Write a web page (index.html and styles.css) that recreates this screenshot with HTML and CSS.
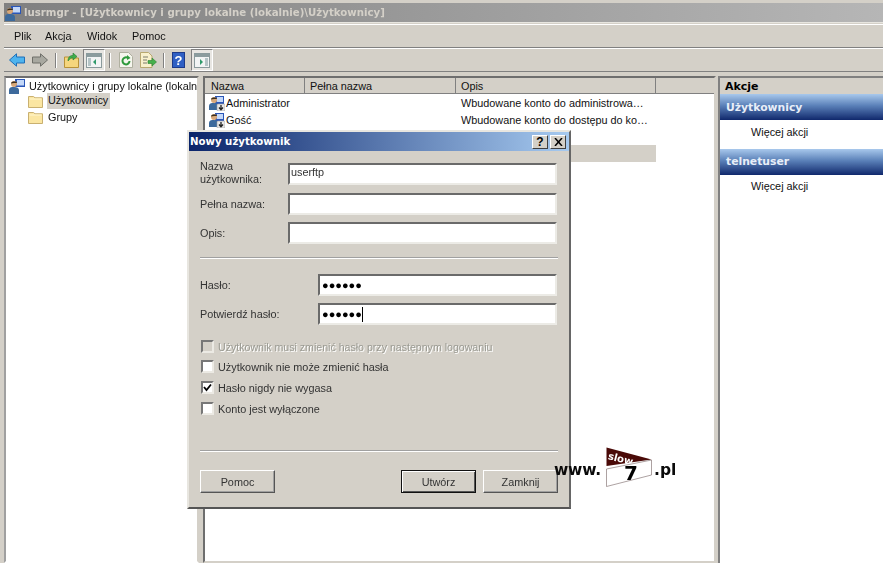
FILE: index.html
```html
<!DOCTYPE html>
<html lang="pl">
<head>
<meta charset="utf-8">
<title>lusrmgr</title>
<link rel="stylesheet" href="styles.css">
</head>
<body>
<svg width="0" height="0" class="defs">
  <defs>
    <symbol id="user" viewBox="0 0 16 16">
      <rect x="6" y="1" width="9" height="8" fill="#2a56b8"/><rect x="8" y="2" width="6" height="5" fill="#c4d8f8"/>
      <circle cx="5" cy="5" r="3" fill="#d9a878"/><path d="M2 4.500C2 2 8 2 8 4L5 4Z" fill="#3a3020"/>
      <path d="M0 15V11C0 8.500 2 8 5 8S9 9 9 11V15Z" fill="#3d6a9c"/>
      <rect x="8" y="9" width="8" height="7" rx="1" fill="#e8e8e8" stroke="#9a9a9a" stroke-width=".6"/>
      <path d="M12 10V14M10 12.500L12 14.800L14 12.500" stroke="#222" stroke-width="1.300" fill="none"/>
    </symbol>
    <symbol id="user-net" viewBox="0 0 16 16">
      <rect x="6" y="1" width="10" height="8" fill="#2a56b8"/><rect x="8" y="2" width="7" height="5.500" fill="#c4d8f8"/>
      <circle cx="5" cy="6" r="3" fill="#d9a878"/><path d="M2 5.500C2 3 8 3 8 5L5 5Z" fill="#3a3020"/>
      <path d="M0 16V12C0 9.500 2 9 5 9S10 10 10 12V16Z" fill="#3d6a9c"/>
    </symbol>
    <symbol id="folder" viewBox="0 0 15 13">
      <path d="M.5 12.500V1.500H5.500L7 2.800H14.500V12.500Z" fill="#fbe6a2" stroke="#c9b070"/>
      <path d="M1.500 4H13.500" stroke="#fff6cf"/>
    </symbol>
    <symbol id="pane" viewBox="0 0 16 15">
      <rect x=".5" y=".5" width="15" height="14" fill="#f2f4f4" stroke="#8a9a9c"/>
      <rect x="1" y="1" width="14" height="3" fill="#8b9c9e"/>
      <rect x="2" y="5" width="3" height="8" fill="#b4c4c6"/>
      <path d="M10 6V12L7 9Z" fill="#2f9a6a"/>
    </symbol>
    <symbol id="pane-r" viewBox="0 0 16 15">
      <rect x=".5" y=".5" width="15" height="14" fill="#f2f4f4" stroke="#8a9a9c"/>
      <rect x="1" y="1" width="14" height="3" fill="#8b9c9e"/>
      <rect x="11" y="5" width="3" height="8" fill="#b4c4c6"/>
      <path d="M6 6V12L9 9Z" fill="#2f9a6a"/>
    </symbol>
  </defs>
</svg>

<div class="app">
  <div class="titlebar">
    <svg class="ico16"><use href="#user-net"/></svg>
    <span>lusrmgr - [Użytkownicy i grupy lokalne (lokalnie)\Użytkownicy]</span>
  </div>
  <nav class="menubar">
    <span class="m1">Plik</span><span class="m2">Akcja</span><span class="m3">Widok</span><span class="m4">Pomoc</span>
  </nav>
  <div class="toolbar">
    <svg class="tool-arrow" viewBox="0 0 16 14"><path d="M.5 7L7.500 .8V4H15.500V10H7.500V13.200Z" fill="#4fb4ee" stroke="#1f6fb8"/></svg>
    <svg class="tool-arrow fwd" viewBox="0 0 16 14"><path d="M15.500 7L8.500 .8V4H.5V10H8.500V13.200Z" fill="#a8a8a0" stroke="#6e6e68"/></svg>
    <i class="sep s1"></i>
    <svg class="tool-folder" viewBox="0 0 15 16"><path d="M.5 15.500V5H6L7 6H14.500V15.500Z" fill="#f5d67e" stroke="#b8923a"/><path d="M4 9C4 5 6 3.500 9 3.500V1L13 4.500L9 8V5.800C7 5.800 6 7 4 9Z" fill="#3fae4c" stroke="#237a30" stroke-width=".6"/></svg>
    <span class="pressed p1"><svg class="ico-pane"><use href="#pane"/></svg></span>
    <i class="sep s2"></i>
    <svg class="tool-refresh" viewBox="0 0 14 16"><path d="M.5.5H9.500L13.500 4.500V15.500H.5Z" fill="#f6f6ee" stroke="#b0b0a0"/><path d="M10.500 9A3.500 3.500 0 1 1 9 6" fill="none" stroke="#2f9a3c" stroke-width="2"/><path d="M8 3L11.500 6L8 8Z" fill="#2f9a3c"/></svg>
    <svg class="tool-export" viewBox="0 0 17 16"><path d="M.5.5H8.500L12 4V15.500H.5Z" fill="#f8f0cc" stroke="#b8a870"/><path d="M3 5H8M3 8H7M3 11H7" stroke="#7a7a6a"/><path d="M8 8.500H12V6L16.500 10L12 14V11.500H8Z" fill="#46b04c" stroke="#2a8030" stroke-width=".6"/></svg>
    <i class="sep s3"></i>
    <svg class="tool-help" viewBox="0 0 13 16"><rect x=".5" y=".5" width="12" height="15" fill="#2f5fc4" stroke="#1d3a8a"/><text x="6.500" y="13" text-anchor="middle" class="help-q">?</text></svg>
    <span class="pressed p2"><svg class="ico-pane"><use href="#pane-r"/></svg></span>
  </div>

  <div class="panes">
    <aside class="tree pane-box">
      <div class="tree-root"><svg class="ico16"><use href="#user-net"/></svg><span>Użytkownicy i grupy lokalne (lokalni</span></div>
      <div class="tree-item"><svg class="ico-folder"><use href="#folder"/></svg><span class="sel">Użytkownicy</span></div>
      <div class="tree-item"><svg class="ico-folder"><use href="#folder"/></svg><span class="lbl">Grupy</span></div>
    </aside>

    <main class="list pane-box">
      <div class="list-head">
        <span class="col c1">Nazwa</span><span class="col c2">Pełna nazwa</span><span class="col c3">Opis</span><span class="col c4"></span>
      </div>
      <div class="row"><span class="c1 cell"><svg class="ico16"><use href="#user"/></svg>Administrator</span><span class="c2 cell"></span><span class="c3 cell">Wbudowane konto do administrowa…</span></div>
      <div class="row"><span class="c1 cell"><svg class="ico16"><use href="#user"/></svg>Gość</span><span class="c2 cell"></span><span class="c3 cell">Wbudowane konto do dostępu do ko…</span></div>
      <div class="row"><span class="c1 cell"><svg class="ico16"><use href="#user"/></svg></span><span class="c2 cell"></span><span class="c3 cell"></span></div>
      <div class="row selected"><span class="c1 cell"></span><span class="c2 cell"></span><span class="c3 cell"></span></div>
    </main>

    <aside class="actions">
      <div class="act-head">Akcje</div>
      <div class="act-group first">Użytkownicy</div>
      <div class="act-item">Więcej akcji</div>
      <div class="act-group">telnetuser</div>
      <div class="act-item tight">Więcej akcji</div>
    </aside>
  </div>
</div>

<section class="dialog">
  <header class="dlg-title">
    <span class="dlg-name">Nowy użytkownik</span>
    <span class="cap-btn help">?</span>
    <span class="cap-btn close"><svg viewBox="0 0 9 8" class="x"><path d="M1 0L8 8M8 0L1 8" stroke="#000" stroke-width="1.500"/></svg></span>
  </header>
  <div class="dlg-body">
    <div class="field f-user"><label>Nazwa<br>użytkownika:</label><div class="input">userftp</div></div>
    <div class="field f-full"><label>Pełna nazwa:</label><div class="input"></div></div>
    <div class="field f-desc"><label>Opis:</label><div class="input"></div></div>
    <hr class="rule r1">
    <div class="field pw f-pass"><label>Hasło:</label><div class="input dots">●●●●●●</div></div>
    <div class="field pw f-conf"><label>Potwierdź hasło:</label><div class="input dots caret">●●●●●●</div></div>
    <div class="check disabled c-a"><i class="box"></i><span>Użytkownik musi zmienić hasło przy następnym logowaniu</span></div>
    <div class="check c-b"><i class="box"></i><span>Użytkownik nie może zmienić hasła</span></div>
    <div class="check c-c"><i class="box"><svg viewBox="0 0 9 9" class="tick"><path d="M1 4L3.500 7L8 1.500" stroke="#000" stroke-width="1.800" fill="none"/></svg></i><span>Hasło nigdy nie wygasa</span></div>
    <div class="check c-d"><i class="box"></i><span>Konto jest wyłączone</span></div>
    <hr class="rule r2">
    <div class="buttons">
      <span class="btn">Pomoc</span>
      <span class="btn default">Utwórz</span>
      <span class="btn">Zamknij</span>
    </div>
  </div>
</section>

<div class="brand">
  <span class="www">www.</span>
  <svg class="flag" viewBox="0 0 46 40">
    <path d="M.5 .5L45.500 12.500L.5 19Z" fill="#4a0a08"/>
    <text x="1.500" y="12" class="slow" transform="rotate(14 1.500 12)">slow</text>
    <path d="M.5 22L45.500 13V28L.5 39.500Z" fill="#fff" stroke="#8a7a7a" stroke-width=".7"/>
    <text x="18" y="33" class="seven">7</text>
  </svg>
  <span class="pl">.pl</span>
</div>
</body>
</html>
```
FILE: styles.css
```css
* { box-sizing: border-box; }
html, body { margin: 0; height: 100%; overflow: hidden; }
body { background: #d4d0c8; font: 10.85px "Liberation Sans", Arial, sans-serif; color: #111; filter: blur(.3px); }
.defs { position: absolute; }
.app { display: flex; flex-direction: column; height: 563px; }

.titlebar {
  margin: 3px 0 0 4px; height: 20px; display: flex; align-items: center; gap: 3px; padding-left: 1px;
  background: linear-gradient(90deg, #808080, #b6b6b6);
  color: #d4d0c8; font: bold 10.2px "DejaVu Sans", sans-serif;
  border-bottom: 1px solid #e8e6e0;
}
.ico16 { width: 16px; height: 16px; flex: none; }

.menubar { height: 24px; margin: 1px 0 0 4px; border-bottom: 1px solid #808080; display: flex; align-items: center; border-top: 1px solid #fff; padding-left: 10px; }
.menubar .m1 { width: 31px; }
.menubar .m2 { width: 42px; }
.menubar .m3 { width: 45px; }

.toolbar { height: 24px; margin-left: 4px; display: flex; align-items: center; border-top: 1px solid #fff; border-bottom: 1px solid #808080; }
.tool-arrow { width: 16px; height: 14px; margin-left: 5px; }
.tool-arrow.fwd { margin-left: 7px; }
.sep { height: 15px; background: #808080; border-right: 1px solid #fff; width: 2px; }
.s1 { margin-left: 7px; }
.tool-folder { width: 15px; height: 16px; margin-left: 7px; }
.pressed { width: 22px; height: 22px; margin-left: 4px; display: flex; align-items: center; justify-content: center; background: #e8e6e2; border: 1px solid; border-color: #808080 #fff #fff #808080; }
.ico-pane { width: 16px; height: 15px; }
.s2 { margin-left: 4px; }
.tool-refresh { width: 14px; height: 16px; margin-left: 8px; }
.tool-export { width: 17px; height: 16px; margin-left: 7px; }
.s3 { margin-left: 6px; }
.tool-help { width: 13px; height: 16px; margin-left: 7px; }
.help-q { font: bold 13px "Liberation Sans", sans-serif; fill: #fff; }
.p2 { margin-left: 6px; }

.panes { flex: 1; display: flex; padding: 4px 0 0 4px; min-height: 0; }
.pane-box { background: #fff; border: 2px solid; border-color: #6e6e6e #d4d0c8 #d4d0c8 #6e6e6e; }
.tree { width: 195px; padding: 0 0 0 3px; border-color: #6e6e6e #d4d0c8 transparent #a0a0a0; overflow: hidden; }
.tree-root { height: 15px; display: flex; align-items: center; gap: 4px; white-space: nowrap; }
.tree-item { height: 16px; display: flex; align-items: center; padding-left: 19px; }
.ico-folder { width: 15px; height: 13px; flex: none; margin-right: 4px; }
.sel { background: #d4d0c8; padding: 0 2px 0 1px; height: 16px; line-height: 15px; }
.lbl { padding-left: 1px; }

.list { width: 513px; margin-left: 4px; }
.list-head { display: flex; height: 16px; background: #d4d0c8; border-bottom: 1px solid #808080; }
.col { border-right: 1px solid #808080; padding: 1px 0 0 5px; height: 15px; line-height: 14px; }
.col.c1 { padding-left: 6px; }
.c1 { width: 100px; }
.c2 { width: 151px; }
.c3 { width: 200px; }
.c4 { flex: 1; border-right: 0; }
.row { display: flex; height: 17px; }
.cell { display: flex; align-items: center; white-space: nowrap; padding-left: 5px; }
.c1.cell { gap: 1px; padding-left: 4px; }
.selected .c2, .selected .c3, .selected .c1 { background: #d4d0c8; }

.actions { flex: 1; margin-left: 2px; background: #fff; border-left: 2px solid #808080; border-top: 2px solid #808080; }
.act-head { height: 16px; background: #d4d0c8; font: bold 11px "DejaVu Sans", sans-serif; padding: 2px 0 0 5px; line-height: 14px; color: #000; }
.act-group { height: 26px; background: linear-gradient(180deg, #a8c8ec 0%, #5a80b8 45%, #10286c 100%); color: #e8eef8; font: bold 10.8px "DejaVu Sans", sans-serif; padding: 6px 0 0 6px; line-height: 14px; }
.act-group.first { padding-top: 7px; }
.act-item { height: 29px; padding: 4px 0 0 31px; line-height: 16px; }
.act-item.tight { padding-top: 3px; }

.dialog { position: absolute; left: 187px; top: 130px; width: 384px; height: 379px; background: #d4d0c8; border: 2px solid; border-color: #e8e6e0 #666 #555 #e8e6e0; }
.dlg-title { height: 19px; background: linear-gradient(90deg, #0a246a, #a6caf0); color: #fff; font: bold 10.2px "DejaVu Sans", sans-serif; display: flex; align-items: center; padding: 0 3px 0 1px; }
.dlg-name { flex: 1; }
.cap-btn { width: 16px; height: 14px; background: #d4d0c8; color: #000; border: 1px solid; border-color: #fff #404040 #404040 #fff; font: bold 12px "Liberation Sans", sans-serif; display: flex; align-items: center; justify-content: center; margin-left: 2px; }
.x { width: 9px; height: 8px; }
.dlg-body { padding: 0 12px 0 11px; display: flex; flex-direction: column; }
.field { display: flex; align-items: center; height: 22px; color: #333; }
.field label { width: 88px; line-height: 13px; }
.f-user label { margin-bottom: 2px; }
.field.pw label { width: 118px; }
.input { flex: 1; height: 22px; background: #fff; border: 2px solid; border-color: #6a6a6a #ecebe6 #ecebe6 #6a6a6a; padding: 0 2px 0 1px; line-height: 15px; }
.f-user { margin-top: 12px; }
.f-full { margin-top: 8px; }
.f-desc { margin-top: 7px; }
.rule { width: 358px; height: 2px; margin: 13px 0 0 0; border: 0; background: #a0a0a0; border-bottom: 1px solid #fff; }
.f-pass { margin-top: 15px; }
.f-conf { margin-top: 7px; }
.dots { font-size: 11px; color: #000; display: flex; align-items: center; padding-left: 2px; }
.caret::after { content: ""; width: 1px; height: 15px; background: #000; }
.check { display: flex; align-items: center; gap: 4px; height: 13px; color: #333; padding-left: 1px; }
.box { width: 13px; height: 13px; flex: none; background: #fff; border: 2px solid; border-color: #777 #eceae4 #eceae4 #777; display: flex; align-items: center; justify-content: center; }
.tick { width: 9px; height: 9px; }
.c-a { margin-top: 15px; }
.c-b { margin-top: 7px; }
.c-c, .c-d { margin-top: 8px; }
.disabled { color: #9a9a92; text-shadow: 1px 1px 0 #fff; font-size: 10.6px; }
.disabled .box { background: #d4d0c8; }
.r2 { margin-top: 35px; }
.buttons { display: flex; margin-top: 18px; width: 358px; gap: 7px; }
.btn { width: 75px; height: 23px; display: flex; align-items: center; justify-content: center; background: #d4d0c8; color: #333; border: 1px solid; border-color: #fff #555 #555 #fff; box-shadow: inset -1px -1px 0 #a0a0a0; }
.btn:first-child { margin-right: auto; }
.default { border-color: #111; box-shadow: inset 1px 1px 0 #fff, inset -1px -1px 0 #555; }

.brand { position: absolute; left: 554px; top: 447px; display: flex; align-items: center; font: bold 15.5px "DejaVu Sans", sans-serif; color: #0a0a0a; }
.www { margin-top: 6px; width: 52px; letter-spacing: -.2px; }
.flag { width: 46px; height: 40px; }
.slow { font: bold 10px "DejaVu Sans", sans-serif; fill: #fff; }
.seven { font: bold 20px "DejaVu Sans", sans-serif; fill: #000; }
.pl { margin-left: 2px; margin-top: 5px; }
```
